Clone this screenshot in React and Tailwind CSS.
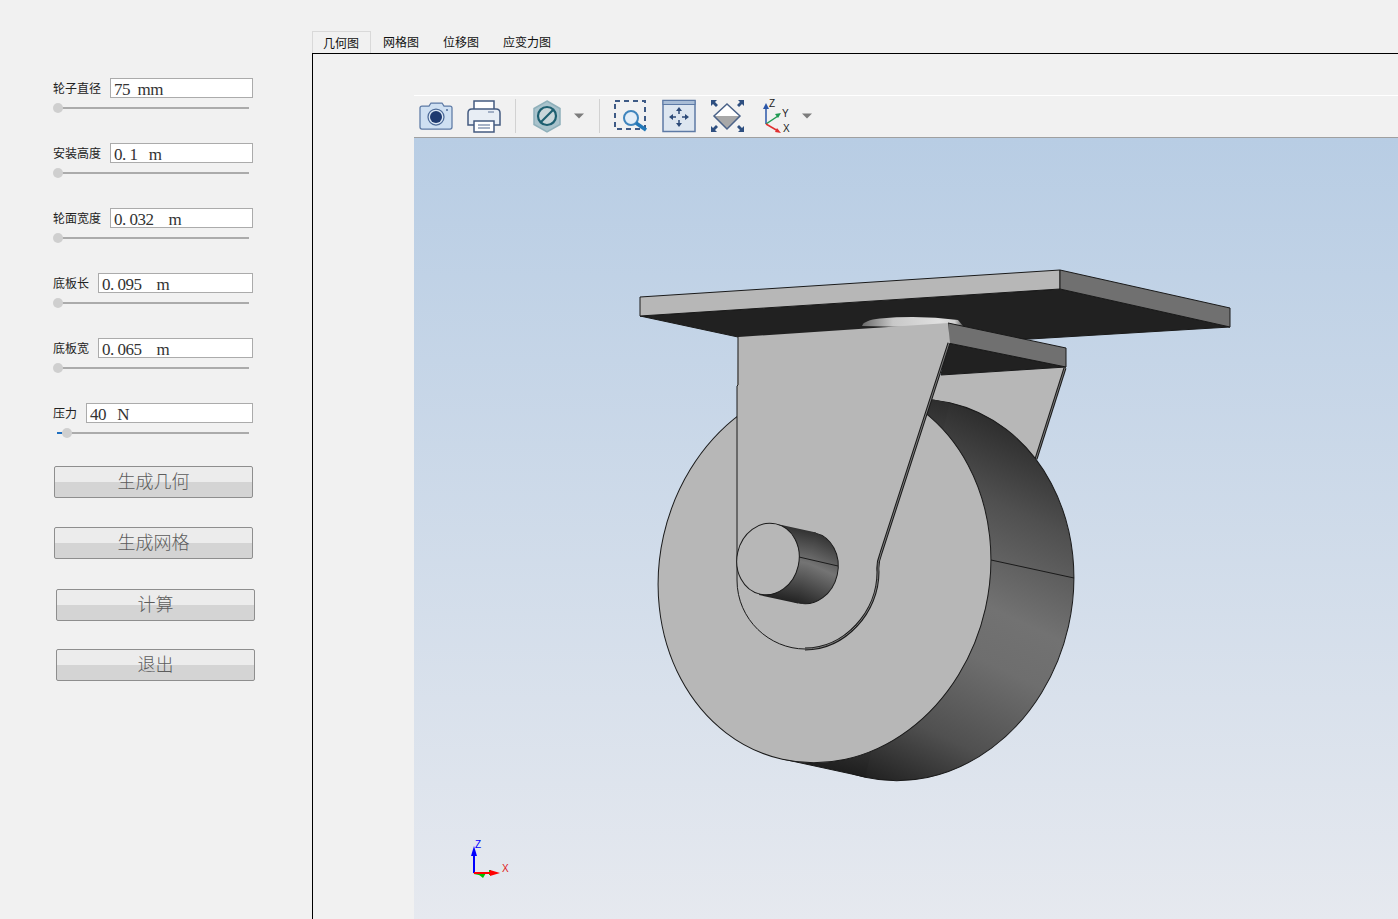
const cjk = '"Noto Sans CJK SC", sans-serif';

// 左侧参数
const params = [
  { label: "轮子直径", value: "75  mm", pos: 0 },
  { label: "安装高度", value: "0. 1   m", pos: 0 },
  { label: "轮面宽度", value: "0. 032    m", pos: 0 },
  { label: "底板长", value: "0. 095    m", pos: 0 },
  { label: "底板宽", value: "0. 065    m", pos: 0 },
  { label: "压力", value: "40   N", pos: 9 },
];

const buttons = [
  { text: "生成几何", cls: "mt-[31px] ml-px" },
  { text: "生成网格", cls: "mt-[29px] ml-px" },
  { text: "计算", cls: "mt-[30px] ml-[3px]" },
  { text: "退出", cls: "mt-[28px] ml-[3px]" },
];

const tabs = [
  { text: "几何图", cls: "w-[59px] pl-[10px]", active: true },
  { text: "网格图", cls: "w-[60px] pl-3" },
  { text: "位移图", cls: "w-[60px] pl-3" },
  { text: "应变力图", cls: "w-[72px] pl-3" },
];

function ParamRow({ label, value, pos }) {
  return (
    <div className="h-[65px] last:h-[32px]">
      <div className="flex items-center gap-[9px] h-5">
        <span className="text-[12px] leading-none text-[#222] whitespace-nowrap" style={{ fontFamily: cjk }}>
          {label}
        </span>
        <div className="flex-1 h-5 bg-white border border-[#ababab] pl-[3px] text-[17px] tracking-[-0.5px] leading-[22px] text-[#333] whitespace-pre font-['Liberation_Serif',serif]">
          {value}
        </div>
      </div>
      <div className="relative ml-1 mt-[9px] w-[192px] h-[2px] bg-[#ababab]">
        {pos > 0 && <div className="absolute left-0 top-0 h-[2px] w-[5px] bg-[#1f6fc0]" />}
        <div
          className="absolute top-[-4px] w-[10px] h-[10px] rounded-full bg-[#cfcfcf]"
          style={{ left: pos - 4 }}
        />
      </div>
    </div>
  );
}

function Button({ text, cls }) {
  return (
    <button
      className={`block w-[199px] h-[32px] shrink-0 border border-[#8e8e8e] rounded-[2px] bg-[linear-gradient(#ececec_50%,#d4d4d4_50%)] text-[18px] leading-[26px] pb-[4px] text-[#5c5c5c] font-light ${cls}`}
      style={{ fontFamily: cjk }}
    >
      {text}
    </button>
  );
}

function Toolbar() {
  return (
    <svg width="984" height="41" viewBox="414 96 984 41" className="block">
      {/* 相机 */}
      <path d="M422 106h7l2-3h11l2 3h6q2 0 2 2v19q0 2-2 2h-28q-2 0-2-2v-19q0-2 2-2z" fill="#cfe0f2" stroke="#5d7aa5" strokeWidth="1.25" />
      <circle cx="436" cy="117" r="8" fill="#dbe7f4" stroke="#4c6a98" strokeWidth="1.25" />
      <circle cx="436" cy="117" r="6" fill="#1e3a70" />
      <circle cx="447" cy="110" r="1" fill="#4c6a98" />
      {/* 打印机 */}
      <path d="M474 101h20v9h-20z" fill="#fff" stroke="#445b80" strokeWidth="1.5" />
      <path d="M472 109h24q4 0 4 4v12h-32v-12q0-4 4-4z" fill="#e8eef5" stroke="#445b80" strokeWidth="1.5" />
      <path d="M474 121h20v11h-20z" fill="#fff" stroke="#445b80" strokeWidth="1.5" />
      <path d="M478 125h12M478 128h12" stroke="#8a9ab5" strokeWidth="1.5" />
      <path d="M488 112h6" stroke="#8a9ab5" strokeWidth="1.5" />
      <path d="M515.5 99v34" stroke="#d2d2d2" />
      {/* 截面 */}
      <path d="M547 101l13 7.500v16l-13 7.500-13-7.500v-16z" fill="#a9c3cc" stroke="#8fb0ba" strokeWidth="1.500" />
      <circle cx="547" cy="116" r="9" fill="#c9d6da" stroke="#1d5f70" strokeWidth="2.200" />
      <path d="M541 122l12-12" stroke="#1d5f70" strokeWidth="2.200" />
      <path d="M574 113.500h10l-5 5z" fill="#7c7c7c" />
      <path d="M599.500 99v34" stroke="#d2d2d2" />
      {/* 框选放大 */}
      <rect x="615" y="101" width="30" height="28" fill="none" stroke="#3e5a85" strokeWidth="2" strokeDasharray="5 4" />
      <circle cx="631" cy="118" r="7" fill="#e3eef8" stroke="#3f85bd" strokeWidth="2" />
      <path d="M636 123l10 7" stroke="#2278b8" strokeWidth="3.500" />
      {/* 平移 */}
      <rect x="663" y="100.500" width="32" height="31" fill="#dde6f0" stroke="#5d7aa5" strokeWidth="1.500" />
      <rect x="663" y="100.500" width="32" height="4" fill="#a9bdd6" stroke="#5d7aa5" />
      <path d="M679 110v4M679 120v4M672 117h4M682 117h4" stroke="#2c4a78" strokeWidth="1.500" />
      <path d="M679 107l-3 4h6zM679 127l-3-4h6zM669 117l4-3v6zM689 117l-4-3v6z" fill="#2c4a78" />
      {/* 适应窗口 */}
      <path d="M727 104l13 12h-26z" fill="#fff" />
      <path d="M714 116h26l-13 13z" fill="#a8a8a8" />
      <path d="M727 104l13 12-13 13-13-13z" fill="none" stroke="#4a6288" strokeWidth="1.500" />
      <path d="M711 100h6l-2 2 3 3-2 2-3-3-2 2zM744 100h-6l2 2-3 3 2 2 3-3 2 2zM711 132h6l-2-2 3-3-2-2-3 3-2-2zM744 132h-6l2-2-3-3 2-2 3 3 2-2z" fill="#2e4f80" />
      {/* 坐标轴 */}
      <path d="M766 124v-18" stroke="#2a56a8" strokeWidth="1.500" />
      <path d="M766 103l-3 6h6z" fill="#2a56a8" />
      <path d="M766 124l12-8" stroke="#1f9a52" strokeWidth="1.500" />
      <path d="M781 113l-6 1 3 4z" fill="#1f9a52" />
      <path d="M766 124l12 7" stroke="#e03030" strokeWidth="1.500" />
      <path d="M781 133l-6-1 2-4z" fill="#e03030" />
      <text x="769" y="107" fontSize="10" fill="#222" fontFamily="Liberation Sans">Z</text>
      <text x="782" y="117" fontSize="10" fill="#222" fontFamily="Liberation Sans">Y</text>
      <text x="783" y="132" fontSize="10" fill="#222" fontFamily="Liberation Sans">X</text>
      <path d="M802 113.500h10l-5 5z" fill="#7c7c7c" />
    </svg>
  );
}

const ln = { stroke: "#1a1a1a", strokeWidth: 1, strokeLinejoin: "round" };

function Caster() {
  const face = "#b7b7b7";
  const side = "#707070";
  const under = "#212121";
  const edge = "M949 343L881 553Q877 563 878 572C878 612 845 649 805 649";
  return (
    <svg width="984" height="781" viewBox="414 138 984 781" className="block">
      <defs>
        <linearGradient id="tread" gradientUnits="userSpaceOnUse" x1="950" y1="400" x2="866" y2="781">
          <stop offset="0" stopColor="#2c2c2c" />
          <stop offset="0.2" stopColor="#505050" />
          <stop offset="0.45" stopColor="#727272" />
          <stop offset="0.58" stopColor="#6e6e6e" />
          <stop offset="0.8" stopColor="#505050" />
          <stop offset="1" stopColor="#1c1c1c" />
        </linearGradient>
        <linearGradient id="axle" gradientUnits="userSpaceOnUse" x1="815" y1="530" x2="800" y2="604">
          <stop offset="0" stopColor="#2e2e2e" />
          <stop offset="0.45" stopColor="#747474" />
          <stop offset="1" stopColor="#222" />
        </linearGradient>
        <linearGradient id="boss" gradientUnits="userSpaceOnUse" x1="862" y1="0" x2="965" y2="0">
          <stop offset="0" stopColor="#6a6a6a" />
          <stop offset="0.3" stopColor="#c8c8c8" />
          <stop offset="0.75" stopColor="#e0e0e0" />
          <stop offset="0.9" stopColor="#d0d0d0" />
          <stop offset="1" stopColor="#444" />
        </linearGradient>
      </defs>

      {/* 顶板 */}
      <path d="M640 316L1060 289L1230 327L1030 339L738 337Z" fill={under} {...ln} />
      <path d="M640 297L1060 270V289L640 316Z" fill={face} {...ln} />
      <path d="M1060 270L1230 308V327L1060 289Z" fill={side} {...ln} />
      <path d="M862 326Q864 320 880 318.500Q920 315 958 320L963 326L948 328Z" fill="url(#boss)" />

      {/* 后支架 */}
      <path d="M925 376L1066 367L1036 460L925 470Z" fill={face} />
      <path d="M1065 368L1036 459" stroke="#1a1a1a" strokeWidth="3" />
      <path d="M1065 368L1036 459" stroke="#777" strokeWidth="1" />
      <path d="M948 343L1066 367L941 375Z" fill={under} {...ln} />
      <path d="M948 323L1066 348V367L948 343Z" fill={side} {...ln} />

      {/* 轮子 */}
      <ellipse cx="907.500" cy="590" rx="165" ry="192" transform="rotate(12.700 907.500 590)" fill="url(#tread)" {...ln} />
      <path d="M866.500 385L949.500 403L865.500 777L782.500 759Z" fill="url(#tread)" />
      <path d="M782.500 759L865.500 777" {...ln} />
      <path d="M991 560L1074 578" {...ln} />
      <ellipse cx="824.500" cy="572" rx="165" ry="192" transform="rotate(12.700 824.500 572)" fill={face} {...ln} />

      {/* 前支架 */}
      <path d="M738 337L948 323L950 343L881 553Q877 563 878 572C878 612 845 649 805 649C770 649 737 620 737 580V385Z" fill={face} />
      <path d="M738 337V385L737 386V580C737 620 770 649 805 649" fill="none" {...ln} />
      <path d={edge} fill="none" stroke="#1a1a1a" strokeWidth="3" />
      <path d={edge} fill="none" stroke="#7a7a7a" strokeWidth="1" />

      {/* 轮轴 */}
      <ellipse cx="807" cy="568" rx="31" ry="36" transform="rotate(12.700 807 568)" fill="url(#axle)" {...ln} />
      <path d="M777 524L816 532.500L798 603.500L759 595Z" fill="url(#axle)" />
      <path d="M799 557L838 566" {...ln} />
      <ellipse cx="768" cy="559" rx="31" ry="36" transform="rotate(12.700 768 559)" fill={face} {...ln} />

      {/* 坐标系 */}
      <path d="M474 873V850" stroke="#0000ff" strokeWidth="2" />
      <path d="M474 846l-3 10h6z" fill="#0000ff" />
      <path d="M474 873l10 2" stroke="#00c000" strokeWidth="2" />
      <path d="M478 874l8-1-3 5z" fill="#00c000" />
      <path d="M490 870v5" stroke="#00c000" strokeWidth="2" />
      <path d="M474 873h20" stroke="#ff0000" strokeWidth="2" />
      <path d="M500 873l-10-3v6z" fill="#ff0000" />
      <text x="475" y="848" fontSize="10" fill="#0000ff" fontFamily="Liberation Sans">Z</text>
      <text x="502" y="872" fontSize="10" fill="#e02020" fontFamily="Liberation Sans">X</text>
    </svg>
  );
}

export default function App() {
  return (
    <div className="flex w-[1398px] h-[919px] overflow-hidden bg-[#f1f1f1]">
      {/* 参数面板 */}
      <aside className="w-[312px] shrink-0 pt-[78px] pl-[53px]">
        <div className="w-[200px]">
          {params.map((p) => (
            <ParamRow key={p.label} {...p} />
          ))}
        </div>
        {buttons.map((b) => (
          <Button key={b.text} {...b} />
        ))}
      </aside>

      {/* 结果区 */}
      <main className="flex-1 flex flex-col pt-[31px] min-w-0">
        <div className="flex h-[22px] shrink-0">
          {tabs.map((t) => (
            <div
              key={t.text}
              className={`${t.cls} h-[22px] pt-[2px] text-[12px] leading-[18px] text-[#111] whitespace-nowrap ${
                t.active ? "border border-b-0 border-[#d9d9d9]" : ""
              }`}
              style={{ fontFamily: cjk }}
            >
              {t.text}
            </div>
          ))}
        </div>
        <div className="flex-1 border-t border-l border-black pl-[101px] pt-[41px] min-h-0">
          <div className="border-t border-white border-b border-b-[#a0a0a0]">
            <Toolbar />
          </div>
          <div className="bg-[linear-gradient(#b8cde4,#e6e9ef)] h-[782px]">
            <Caster />
          </div>
        </div>
      </main>
    </div>
  );
}
